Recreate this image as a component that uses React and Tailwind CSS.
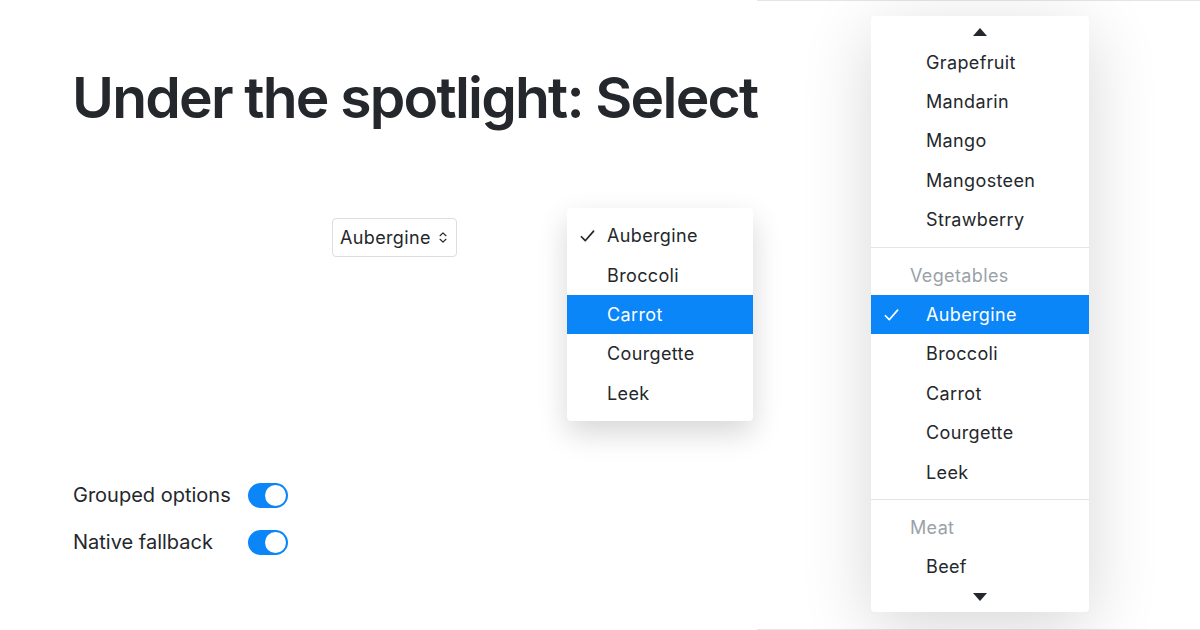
import { ChevronsUpDown } from 'lucide-react';

const font = { fontFamily: 'Inter, "Noto Sans", sans-serif' };

const Check = ({ className = '' }) => (
  <svg viewBox="0 0 16 14" className={`w-[15px] h-[14px] ${className}`} fill="none" stroke="currentColor" strokeWidth="1.8" strokeLinecap="round" strokeLinejoin="round">
    <path d="M1.5 7.8 L5.6 12 L14.5 1.8" />
  </svg>
);

const Toggle = () => (
  <div className="w-[40px] h-[25px] rounded-full bg-[#0a86f9] p-[2px] flex justify-end">
    <div className="w-[21px] h-[21px] rounded-full bg-white" />
  </div>
);

const Item = ({ label, selected, active, indent = 'pl-[40px]' }) => (
  <div className={`relative h-[39.4px] flex items-center text-[18px] tracking-[0.02em] ${indent} ${active ? 'bg-[#0a86f9] text-white' : 'text-[#24272b]'}`}>
    {selected && <Check className="absolute left-[13px] top-[13px]" />}
    {label}
  </div>
);

const Divider = () => <div className="h-px bg-[#e3e4e6] my-[7.5px]" />;

const Header = ({ label }) => (
  <div className="h-[39.4px] flex items-center pl-[39px] text-[18px] tracking-[0.02em] text-[#9ba1a8]">{label}</div>
);

export default function App() {
  return (
    <div className="w-[1200px] h-[630px] bg-white flex overflow-hidden" style={font}>
      {/* left panel */}
      <div className="w-[757px] shrink-0 flex flex-col">
        <h1 className="pl-[72px] pt-[64px] text-[57px] leading-[68px] font-semibold tracking-[-1.8px] text-[#24272b] whitespace-nowrap">
          Under the spotlight: Select
        </h1>

        <div className="flex items-start mt-[76px]">
          <div className="ml-[332px] mt-[10px] h-[39px] w-[125px] border border-[#dcdde0] rounded-[4px] flex items-center pl-[7px] gap-[5px] text-[18px] tracking-[0.02em] text-[#24272b]">
            Aubergine
            <ChevronsUpDown className="w-[14px] h-[15px]" strokeWidth={2} />
          </div>

          <div className="ml-[110px] w-[186px] bg-white rounded-[4px] py-[8px] shadow-[0_12px_30px_rgba(0,0,0,0.16)] relative z-10">
            <Item label="Aubergine" selected />
            <Item label="Broccoli" />
            <Item label="Carrot" active />
            <Item label="Courgette" />
            <Item label="Leek" />
          </div>
        </div>

        <div className="mt-[62px] pl-[73px] flex flex-col gap-[22px] text-[20px] leading-[25px] text-[#24272b]">
          <div className="flex items-center">
            <span className="w-[175px]">Grouped options</span>
            <Toggle />
          </div>
          <div className="flex items-center">
            <span className="w-[175px]">Native fallback</span>
            <Toggle />
          </div>
        </div>
      </div>

      {/* right panel */}
      <div className="flex-1 border-t border-b border-[#e4e5e7] pl-[114px] pt-[15px]">
        <div className="w-[218px] h-[596px] bg-white rounded-[4px] shadow-[0_16px_70px_rgba(0,0,0,0.16)] flex flex-col">
          <div className="h-[26.5px] flex items-center justify-center pt-[6px]">
            <svg width="14" height="8" viewBox="0 0 14 8"><path d="M0 8 L7 0 L14 8 Z" fill="#24272b" /></svg>
          </div>
          <Item label="Grapefruit" indent="pl-[55px]" />
          <Item label="Mandarin" indent="pl-[55px]" />
          <Item label="Mango" indent="pl-[55px]" />
          <Item label="Mangosteen" indent="pl-[55px]" />
          <Item label="Strawberry" indent="pl-[55px]" />
          <Divider />
          <Header label="Vegetables" />
          <Item label="Aubergine" selected active indent="pl-[55px]" />
          <Item label="Broccoli" indent="pl-[55px]" />
          <Item label="Carrot" indent="pl-[55px]" />
          <Item label="Courgette" indent="pl-[55px]" />
          <Item label="Leek" indent="pl-[55px]" />
          <Divider />
          <Header label="Meat" />
          <Item label="Beef" indent="pl-[55px]" />
          <div className="flex-1 flex items-center justify-center pb-[4px]">
            <svg width="14" height="8" viewBox="0 0 14 8"><path d="M0 0 L7 8 L14 0 Z" fill="#24272b" /></svg>
          </div>
        </div>
      </div>
    </div>
  );
}
